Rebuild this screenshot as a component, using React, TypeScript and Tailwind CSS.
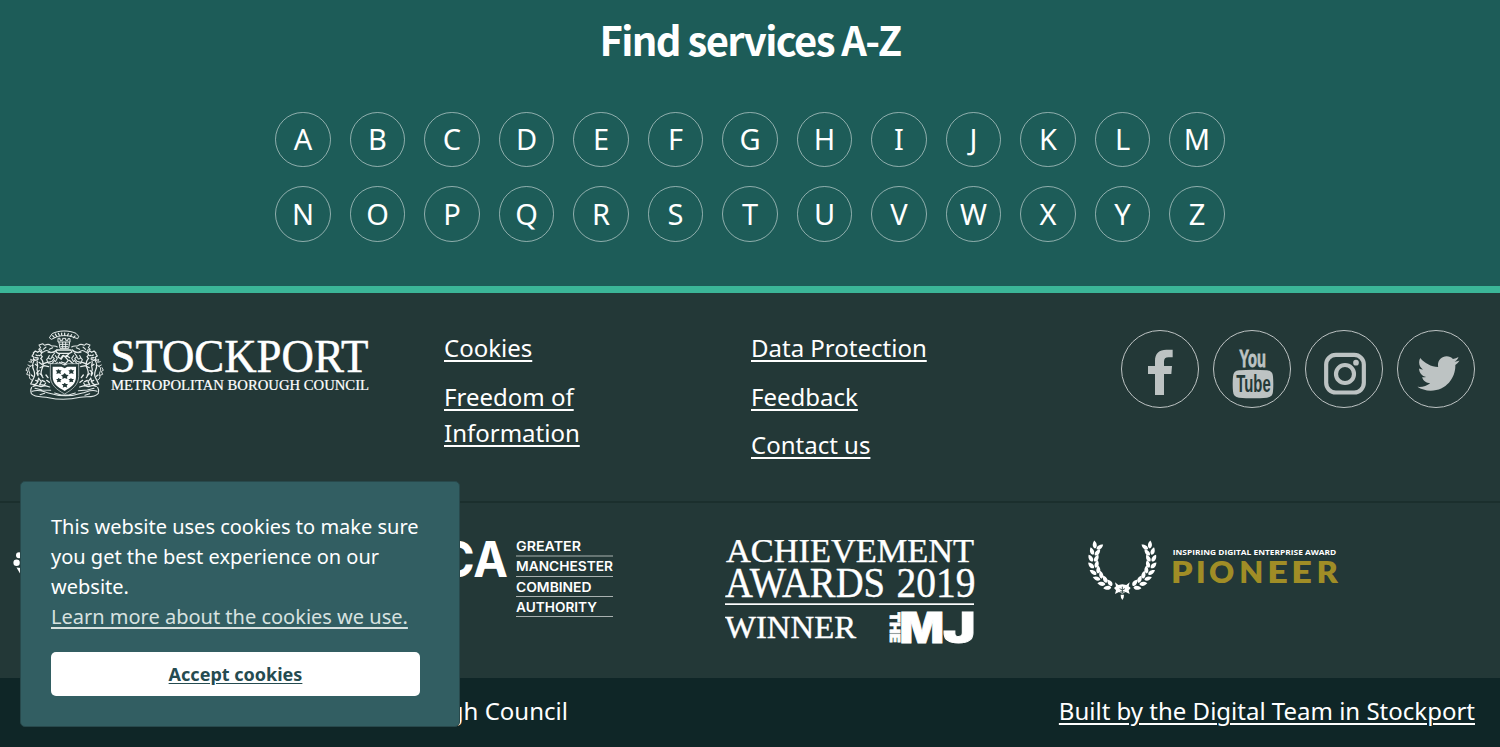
import { FaTwitter } from "react-icons/fa";

const rows = ["ABCDEFGHIJKLM", "NOPQRSTUVWXYZ"];

const serif = "'Liberation Serif', serif";
const sans = "Inter, sans-serif";

function Supporter() {
  return (
    <g fill="none" stroke="#e9eeed" strokeWidth="3.6" strokeLinecap="round" strokeLinejoin="round">
      <path d="M40 84l6-6 7 4 6-5 6 7-3 6 5 5-5 6M41 86l-5 7 6 4-2 6 8 3 7-4" />
      <path d="M48 90l4 2M56 91l3 1M46 98l8 1" strokeWidth="4" />
      <path d="M43 105c-6 10-7 20-2 30 5 10 3 20-2 28M64 102c8 10 6 22 1 32-3 8-1 18 4 24" />
      <path d="M52 108c-3 8 4 12 0 20s4 14 2 22M57 112l8 6 16-6 6 3M60 128l12-6 14 3M46 118l6 4M58 136l-8 8 4 8" />
      <path d="M40 122c-8-2-13 3-14 10s5 10 3 17-1 14 6 16M27 110l8 2-3-9 8 4M22 128l-4 8 6 3-4 9 8 3M24 120l8 4" strokeWidth="2.8" />
      <path d="M38 165l-6 12 12 2 8-6 4-14M56 160l8 10-5 9 14 1 4-6M39 184l10-3 14 4 12-3 14 4" />
      <path d="M34 150l5 4M60 146l6 5M47 166l7 3M66 166l8 4M78 150l6 8M80 166l8 6" strokeWidth="4" />
    </g>
  );
}

function Mantling() {
  return (
    <g fill="none" stroke="#dfe6e5" strokeWidth="3.2" strokeLinecap="round" strokeLinejoin="round">
      <path d="M112 66c-8-6-14 0-20-5s-14-2-18 0l-6-5-11 4 5 8-6 5 8 2 3 8 8-5c8-5 10 3 18 4s14-2 18-8" />
      <path d="M108 76c-8 8-18 8-24 6M88 92c-5 5-2 10 4 10l5-7 6 6-7 8-12 3-4-8 5-6M104 84l-8 10M98 68l-10 5M78 66l-8 7" />
      <path d="M104 106l-8 10-9-3M106 92l6 8-6 10M112 112l-8 8-8 2" />
    </g>
  );
}

function CouncilLogo() {
  return (
    <svg className="block h-20 w-[352px]" viewBox="0 0 352 80" role="img" aria-label="Stockport Metropolitan Borough Council">
      <g transform="scale(.33333)">
        <g fill="none" stroke="#e9eeed" strokeWidth="3" strokeLinejoin="round" strokeLinecap="round">
          <path d="M89 39l5 4 9-4c16-9 39-10 61-1l9 3 3-7-8-9C145 15 118 16 98 25z" />
          <path d="M98 32l5 5M106 27l4 7M115 25l3 6M125 24v6M134 24v6M145 26l-3 6M155 29l-4 5M165 33l-4 5" strokeWidth="3.6" />
          <path d="M114 41v10h36V41h-6v5h-7v-6h-9v6h-8v-5zM117 52l3 18h26l3-18M121 58h23M123 65h20M128 52v17M137 52v17" />
          <path d="M111 75h41l4 6-8 4h-33l-7-4zM119 86l-5 10 8 5 6-9 10 4 8-9M123 103l8-12 14 15-8 10-13-5M138 91l11 7M148 106l8 7M118 112l9 6 13 1" strokeWidth="3.8" />
        </g>
        <Mantling />
        <g transform="matrix(-1 0 0 1 267 0)">
          <Mantling />
        </g>
        <Supporter />
        <g transform="matrix(-1 0 0 1 268 0)">
          <Supporter />
        </g>
        <path d="M91 116h33l10 5 10-5h32v38c0 24-18 39-42 53-25-13-43-29-43-53z" fill="#233837" stroke="#dfe6e5" strokeWidth="2" />
        <path d="M98 125h27l9 5 8-5h26v31c0 20-15 31-34 42-20-11-36-22-36-42z" fill="#fff" />
        <g fill="#233837">
          <path d="M114 132l5 4 6 0-4 5 2 6-7-2-7 2 2-6-4-5h6zM152 132l5 4h6l-4 5 2 6-7-2-7 2 2-6-4-5h6zM134 144l5 5 7 1-5 5 1 7-8-3-7 3 1-7-5-5 6-1zM115 158l5 4h5l-4 5 2 5-6-2-6 2 1-6-4-4h6zM152 158l4 4h6l-4 5 2 5-6-2-6 2 1-6-4-4h6zM134 173l4 4h6l-4 5 2 6-7-3-7 3 2-6-5-5h6z" />
        </g>
        <g fill="none" stroke="#e0e7e6" strokeWidth="3.2" strokeLinecap="round">
          <path d="M35 187c-5 7-3 13-1 19 12 13 35 8 52 12 31 7 67 5 95-1 19-4 42 3 54-12 2-6 2-12-2-18M37 199c19-8 32 1 48 5 35 11 66 12 102 0 16-4 29-12 44-5M45 190l21 5 26 1M222 190l-20 5-27 2M104 204l20 6h22l20-6M60 209l14-4M195 211l14-5" />
        </g>
      </g>
      <g fill="#fff" fontFamily={serif} stroke="#fff">
        <text x="90.5" y="46.5" fontSize="46.5" textLength="258" lengthAdjust="spacingAndGlyphs" strokeWidth=".5">STOCKPORT</text>
        <text x="91" y="65" fontSize="14.6" textLength="258" lengthAdjust="spacingAndGlyphs" strokeWidth=".2">METROPOLITAN BOROUGH COUNCIL</text>
      </g>
    </svg>
  );
}

function FacebookGlyph() {
  return (
    <svg viewBox="0 0 234 234" className="size-[78px] flex-none" fill="#bdc3c3">
      <path d="M102 195V132H81V108H102V92C102 70 115 59 136 59H155V82H143C133 82 129 86 129 95V108H153L151 132H129V195Z" />
    </svg>
  );
}

function YoutubeGlyph() {
  return (
    <svg viewBox="0 0 234 234" className="size-[78px] flex-none" fill="#bdc3c3" fontFamily="'Liberation Sans', sans-serif" fontWeight="700">
      <text x="79" y="112" fontSize="74" textLength="80" lengthAdjust="spacingAndGlyphs" stroke="#bdc3c3" strokeWidth="2.5">You</text>
      <path d="M78 121Q120 118 162 121Q179 122 180 140Q182 162 180 184Q179 202 162 203Q120 206 78 203Q61 202 60 184Q58 162 60 140Q61 122 78 121Z" />
      <text x="70" y="187" fontSize="74" textLength="103" lengthAdjust="spacingAndGlyphs" fill="#233837">Tube</text>
    </svg>
  );
}

function InstagramGlyph() {
  return (
    <svg viewBox="0 0 234 234" className="size-[78px] flex-none">
      <g fill="none" stroke="#bdc3c3" strokeWidth="12.5">
        <rect x="63.5" y="74.5" width="113" height="113" rx="29" />
        <circle cx="120" cy="132" r="27" />
      </g>
      <circle cx="153" cy="98" r="8.5" fill="#bdc3c3" />
    </svg>
  );
}

function TwitterGlyph() {
  return (
    <svg viewBox="0 0 234 234" className="size-[78px] flex-none">
      <g transform="translate(61 67)">
        <FaTwitter size="127" color="#bdc3c3" />
      </g>
    </svg>
  );
}

const socials = [
  { name: "Facebook", Glyph: FacebookGlyph },
  { name: "YouTube", Glyph: YoutubeGlyph },
  { name: "Instagram", Glyph: InstagramGlyph },
  { name: "Twitter", Glyph: TwitterGlyph },
];

function PartnerMark() {
  return (
    <svg className="block h-[60px] w-[60px]" viewBox="0 0 60 60" fill="#fff">
      <circle cx="6" cy="15.3" r="3" />
      <circle cx="3.6" cy="22.7" r="3.2" />
      <path d="M3.5 27.5L8 28L12 42Z" />
    </svg>
  );
}

function GmcaLogo() {
  const lines = [
    { word: "GREATER", y: 11, w: 65 },
    { word: "MANCHESTER", y: 31.3, w: 97 },
    { word: "COMBINED", y: 51.7, w: 75.5 },
    { word: "AUTHORITY", y: 72, w: 81 },
  ];
  return (
    <svg className="block h-20 w-[283px]" viewBox="0 0 283 80" fill="#fff" fontFamily={sans}>
      <text x="32" y="36.7" fontSize="49.5" fontWeight="700" textLength="146" lengthAdjust="spacingAndGlyphs">GMCA</text>
      <g fontSize="13" fontWeight="600">
        {lines.map((l) => (
          <text key={l.word} x="186" y={l.y} textLength={l.w} lengthAdjust="spacingAndGlyphs">{l.word}</text>
        ))}
      </g>
      <path d="M186 16H283M186 36.5H283M186 56.5H283M186 76.5H283" stroke="#a9b1b0" strokeWidth="1.1" />
    </svg>
  );
}

function AwardsLogo() {
  return (
    <svg className="block h-[106px] w-[252px]" viewBox="0 0 252 106" fill="#fff" fontFamily={serif}>
      <g stroke="#fff" strokeWidth=".4">
        <text x="1" y="22" fontSize="33.7" textLength="248" lengthAdjust="spacingAndGlyphs">ACHIEVEMENT</text>
        <text x="0" y="57" fontSize="42.5" textLength="160" lengthAdjust="spacingAndGlyphs">AWARDS</text>
        <text x="171.5" y="57" fontSize="42.5" textLength="79" lengthAdjust="spacingAndGlyphs">2019</text>
        <text x="0" y="98.3" fontSize="32" textLength="131" lengthAdjust="spacingAndGlyphs">WINNER</text>
      </g>
      <rect x="0" y="63.3" width="249" height="1.7" />
      <g fontFamily={sans} fontWeight="900" stroke="#fff" strokeWidth=".8">
        <text transform="translate(165.3 72) rotate(90)" fontSize="13.2" textLength="30.8" lengthAdjust="spacingAndGlyphs">THE</text>
        <text x="174.6" y="102.7" fontSize="42.6" textLength="44.6" lengthAdjust="spacingAndGlyphs">M</text>
        <text x="218" y="102.7" fontSize="42.6" textLength="32.5" lengthAdjust="spacingAndGlyphs">J</text>
      </g>
    </svg>
  );
}

const leafAngles = [113, 100, 87, 74, 61, 48, 35, 22];

function Branch() {
  return (
    <g fill="#fff">
      {leafAngles.map((a) => (
        <g key={a} transform={`rotate(${a} 127 90)`}>
          <path transform="translate(127 174) rotate(30)" d="M0 0C-3-9-14-10-24-1C-15 6-5 7 0 0Z" />
          <path transform="translate(127 179) rotate(-28)" d="M0 0C-3-7-14-9-24 0C-15 8-4 8 0 0Z" />
        </g>
      ))}
    </g>
  );
}

const pioneer = [
  { c: "P", x: 91, s: 1.1 },
  { c: "I", x: 116, s: 1 },
  { c: "O", x: 129, s: 1 },
  { c: "N", x: 159.3, s: 1 },
  { c: "E", x: 187.3, s: 1.16 },
  { c: "E", x: 211.3, s: 1.16 },
  { c: "R", x: 236.5, s: 1.05 },
];

function PioneerLogo() {
  return (
    <svg className="block h-[75px] w-[260px]" viewBox="0 0 260 75">
      <g transform="scale(.33333)">
        <Branch />
        <g transform="matrix(-1 0 0 1 254 0)">
          <Branch />
        </g>
        <path d="M105 157l10 8 12-2 12 2 10-8-3 12 6 5-6 7 3 11-12-6-10 5-10-5-12 6 3-11-6-7 6-5zM122 194h10l-1 9-4 7-4-7z" fill="#fff" />
        <path d="M127 170v20M119 176l8 4 8-4M120 186h14" stroke="#233837" strokeWidth="2.5" fill="none" />
      </g>
      <text x="92.8" y="25" fontFamily="'Open Sans', sans-serif" fontWeight="700" fontSize="7.2" textLength="163.5" fill="#fff" lengthAdjust="spacingAndGlyphs">INSPIRING DIGITAL ENTERPRISE AWARD</text>
      <g fontFamily="Lato, sans-serif" fontWeight="800" fontSize="31" fill="#a08d26">
        {pioneer.map((l) => (
          <text key={l.x} transform={`translate(${l.x} 53) scale(${l.s} 1)`}>{l.c}</text>
        ))}
      </g>
    </svg>
  );
}

export default function App() {
  return (
    <div className="relative flex h-[747px] w-[1500px] flex-col overflow-hidden bg-[#233837] font-['Noto_Sans',sans-serif] text-white">
      <section className="flex h-[293px] flex-none flex-col items-center border-b-[7px] border-[#3bb698] bg-[#1d5c58]">
        <h2 className="mt-[9px] h-[61px] font-['Noto_Sans_CJK_SC',sans-serif] text-[40px] leading-[60px] font-bold tracking-[-1.6px] whitespace-nowrap">
          Find services A-Z
        </h2>
        <div className="mt-[41.5px] flex flex-col gap-[19px]">
          {rows.map((row) => (
            <ul key={row} className="flex gap-[19px]">
              {row.split("").map((c) => (
                <li key={c}>
                  <a href="#" className="flex size-[55.5px] items-center justify-center rounded-full border border-white/50 pb-px text-[29px]">
                    {c}
                  </a>
                </li>
              ))}
            </ul>
          ))}
        </div>
      </section>

      <footer className="flex flex-1 flex-col">
        <div className="flex h-[210px] flex-none border-b-2 border-[#1b2f2d] pt-[37px] pr-[25px] pl-5">
          <div className="-mt-[5px] w-[424px] flex-none">
            <CouncilLogo />
          </div>
          <ul className="flex w-[307px] flex-none flex-col gap-[12.5px] pr-[100px] text-2xl leading-9 underline decoration-2 underline-offset-[3px]">
            <li><a href="#">Cookies</a></li>
            <li><a href="#">Freedom of Information</a></li>
          </ul>
          <ul className="flex flex-none flex-col gap-[12.5px] text-2xl leading-9 underline decoration-2 underline-offset-[3px]">
            <li><a href="#">Data Protection</a></li>
            <li><a href="#">Feedback</a></li>
            <li><a href="#">Contact us</a></li>
          </ul>
          <div className="ml-auto flex gap-[14px]">
            {socials.map(({ name, Glyph }) => (
              <a key={name} href="#" aria-label={name} className="flex size-[78px] items-center justify-center rounded-full border border-[#bdc3c3]">
                <Glyph />
              </a>
            ))}
          </div>
        </div>

        <div className="flex h-[175px] flex-none items-start pt-[37px] pl-[13px]">
          <PartnerMark />
          <div className="ml-[257px]"><GmcaLogo /></div>
          <div className="ml-[112px]"><AwardsLogo /></div>
          <div className="-mt-[10px] ml-[103px]"><PioneerLogo /></div>
        </div>

        <div className="flex flex-1 items-start justify-between bg-[#0f2627] pt-[15px] pr-[25px] pl-[25px] text-2xl leading-9">
          <p>© 2023 Stockport Metropolitan Borough Council</p>
          <a href="#" className="underline decoration-2 underline-offset-[3px]">Built by the Digital Team in Stockport</a>
        </div>
      </footer>

      <aside className="absolute top-[481px] left-5 flex h-[246px] w-[440px] flex-col rounded-[5px] border border-[#28494c] bg-[#325e62] pt-[30px] pr-[39px] pl-[30px]">
        <p className="text-xl leading-[30px]">
          This website uses cookies to make sure you get the best experience on our website.
          <br />
          <a href="#" className="text-[#d8e2e0] underline decoration-2 underline-offset-[3px]">Learn more about the cookies we use.</a>
        </p>
        <button className="mt-5 h-11 rounded-[5px] bg-white text-lg font-bold text-[#254b50] underline underline-offset-2">Accept cookies</button>
      </aside>
    </div>
  );
}
